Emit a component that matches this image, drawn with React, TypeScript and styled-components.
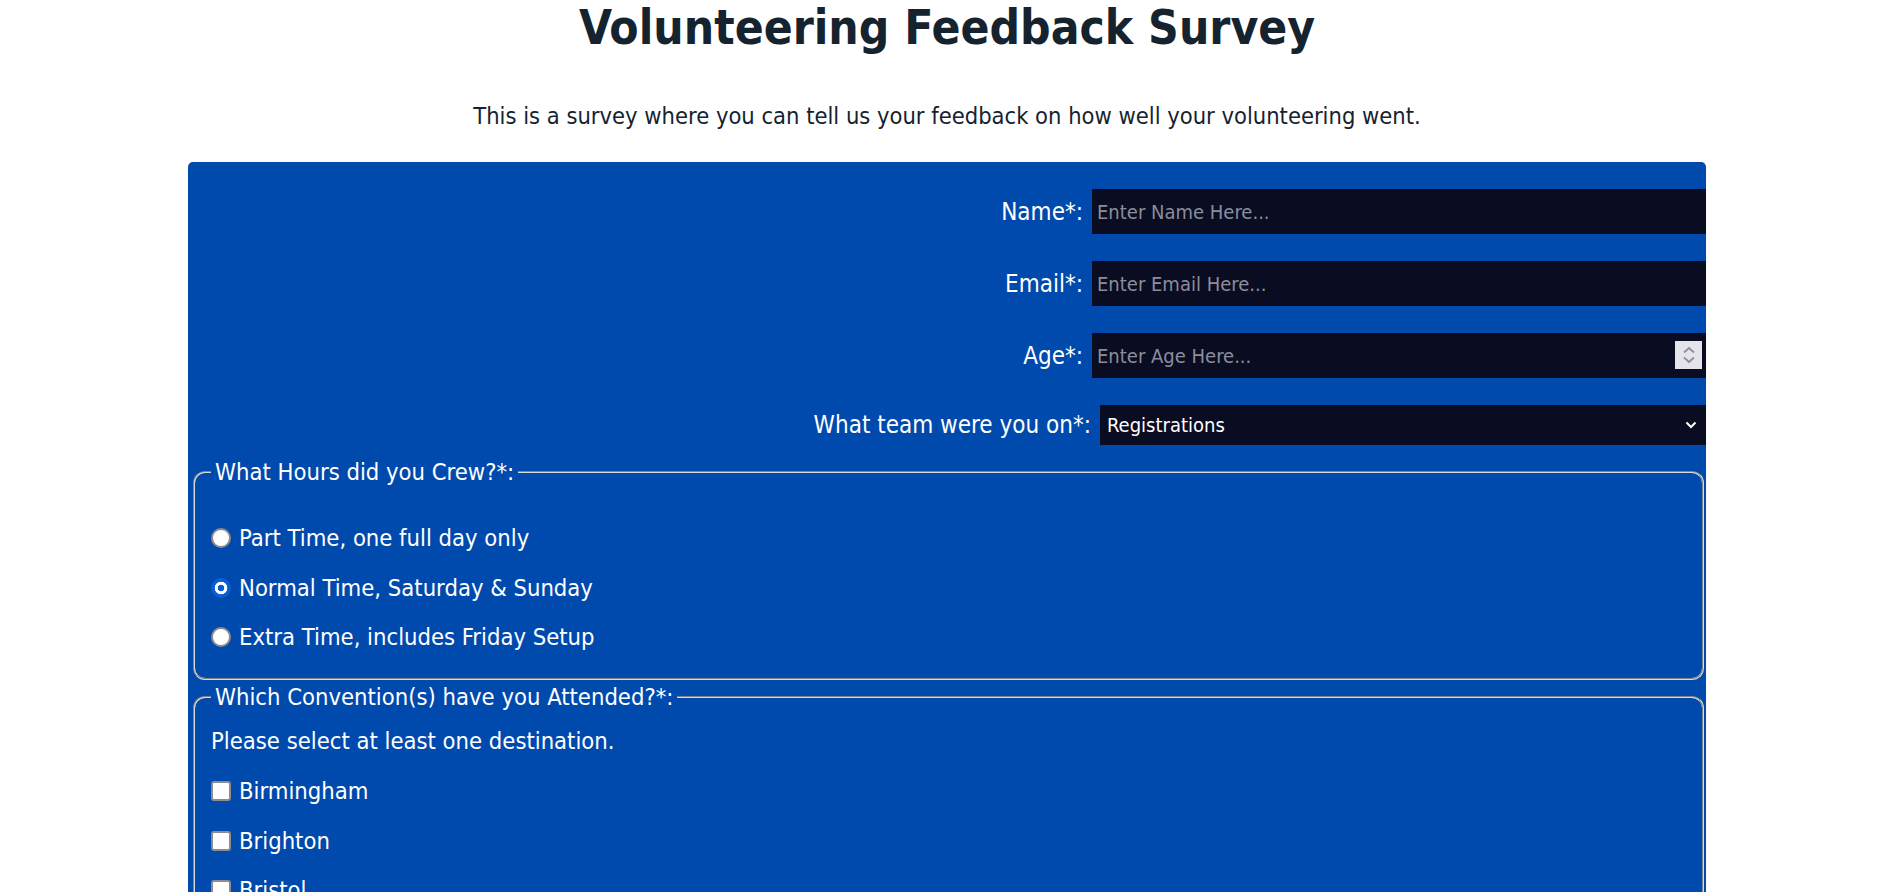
import React from "react";
import styled, { createGlobalStyle } from "styled-components";

const GlobalStyle = createGlobalStyle`
  html, body {
    margin: 0;
    padding: 0;
    background: #ffffff;
  }
  body {
    font-family: "DejaVu Sans Condensed", "DejaVu Sans", "Noto Sans", sans-serif;
    color: #15232f;
  }
  * { box-sizing: border-box; }
`;

const Page = styled.main`
  display: flex;
  flex-direction: column;
  align-items: center;
`;

const Title = styled.h1`
  margin: 0;
  font-size: 47.5px;
  font-weight: bold;
  color: #15232f;
  text-align: center;
`;

const Intro = styled.p`
  margin: 47px 0 32px;
  font-size: 23.5px;
  color: #15232f;
  text-align: center;
`;

const Panel = styled.form`
  width: 1518px;
  background: #004aad;
  border-radius: 5px 5px 0 0;
  padding: 27px 0 40px;
  display: flex;
  flex-direction: column;
  box-shadow: 0 0 3px rgba(0, 0, 0, 0.04);
`;

const Row = styled.div`
  display: flex;
  justify-content: flex-end;
  align-items: center;
  gap: 9px;
  margin-bottom: 27px;
  &:last-of-type { margin-bottom: 0; }
`;

const Label = styled.label`
  font-size: 24px;
  color: #ffffff;
  white-space: nowrap;
`;

const ControlWrap = styled.div<{ $w: number }>`
  position: relative;
  width: ${(p) => p.$w}px;
  display: flex;
`;

const TextInput = styled.input`
  width: 100%;
  height: 45px;
  border: none;
  outline: none;
  background: #0a0c22;
  color: #ffffff;
  font-family: inherit;
  font-size: 20px;
  padding: 0 5px;
  &::placeholder { color: #8c8c9b; }
  &::-webkit-inner-spin-button,
  &::-webkit-outer-spin-button {
    -webkit-appearance: none;
    margin: 0;
  }
  -moz-appearance: textfield;
`;

const Spinner = styled.span`
  position: absolute;
  right: 4px;
  top: 8px;
  width: 27px;
  height: 28px;
  background: #e4e4ea;
  display: flex;
  align-items: center;
  justify-content: center;
  pointer-events: none;
`;

const Select = styled.select`
  width: 100%;
  height: 40px;
  border: none;
  outline: none;
  background: #0a0c22;
  color: #ffffff;
  font-family: inherit;
  font-size: 20px;
  padding: 0 30px 0 7px;
  appearance: none;
  -webkit-appearance: none;
`;

const Chevron = styled.svg`
  position: absolute;
  right: 9px;
  top: 16px;
  pointer-events: none;
`;

const Group = styled.fieldset<{ $top: number }>`
  margin: 0 2px 3px 5px;
  border: 2px groove #d8d8d8;
  border-radius: 12px;
  padding: ${(p) => p.$top}px 16px 27px;
  color: #ffffff;
  font-size: 23.6px;
  min-width: 0;
  &:first-of-type { margin-top: 13px; }
`;

const Legend = styled.legend`
  padding: 0 4px;
  font-size: 23.6px;
  line-height: 28px;
  color: #ffffff;
`;

const Hint = styled.p`
  margin: 0 0 22px;
  line-height: 28px;
  font-size: 23.6px;
`;

const OptionList = styled.div`
  display: flex;
  flex-direction: column;
  gap: 21.5px;
`;

const Option = styled.label`
  display: flex;
  align-items: center;
  gap: 8px;
  height: 28px;
  font-size: 23.6px;
  color: #ffffff;
`;

const Radio = styled.input.attrs({ type: "radio" })`
  appearance: none;
  -webkit-appearance: none;
  width: 20px;
  height: 20px;
  margin: 0;
  flex: none;
  border-radius: 50%;
  background: #ffffff;
  border: 2.5px solid #8c8c92;
  &:checked {
    border: none;
    background: radial-gradient(circle, #0b5cd5 0 3px, #ffffff 3.6px 6px, #0b5cd5 6.6px);
  }
`;

const Check = styled.input.attrs({ type: "checkbox" })`
  appearance: none;
  -webkit-appearance: none;
  width: 20px;
  height: 20px;
  margin: 0;
  flex: none;
  border-radius: 3px;
  background: #ffffff;
  border: 2.5px solid #8c8c92;
`;

const hours = [
  "Part Time, one full day only",
  "Normal Time, Saturday & Sunday",
  "Extra Time, includes Friday Setup",
];

const conventions = [
  "Birmingham",
  "Brighton",
  "Bristol",
  "Cardiff",
  "Edinburgh",
  "London",
  "Manchester",
];

export default function App() {
  return (
    <>
      <GlobalStyle />
      <Page>
        <Title>Volunteering Feedback Survey</Title>
        <Intro>
          This is a survey where you can tell us your feedback on how well your volunteering went.
        </Intro>
        <Panel onSubmit={(e) => e.preventDefault()}>
          <Row>
            <Label htmlFor="name">Name*:</Label>
            <ControlWrap $w={614}>
              <TextInput id="name" type="text" placeholder="Enter Name Here..." />
            </ControlWrap>
          </Row>
          <Row>
            <Label htmlFor="email">Email*:</Label>
            <ControlWrap $w={614}>
              <TextInput id="email" type="email" placeholder="Enter Email Here..." />
            </ControlWrap>
          </Row>
          <Row>
            <Label htmlFor="age">Age*:</Label>
            <ControlWrap $w={614}>
              <TextInput id="age" type="number" placeholder="Enter Age Here..." />
              <Spinner>
                <svg width="14" height="20" viewBox="0 0 14 20" fill="none">
                  <path d="M2 7.5 L7 3 L12 7.5" stroke="#8e8e9c" strokeWidth="1.8" />
                  <path d="M2 12.5 L7 17 L12 12.5" stroke="#8e8e9c" strokeWidth="1.8" />
                </svg>
              </Spinner>
            </ControlWrap>
          </Row>
          <Row>
            <Label htmlFor="team">What team were you on*:</Label>
            <ControlWrap $w={606}>
              <Select id="team" defaultValue="Registrations">
                <option>Registrations</option>
                <option>Security</option>
                <option>Tech</option>
                <option>Info Desk</option>
              </Select>
              <Chevron width="12" height="8" viewBox="0 0 12 8" fill="none">
                <path d="M1.5 1.5 L6 6 L10.5 1.5" stroke="#ffffff" strokeWidth="2" />
              </Chevron>
            </ControlWrap>
          </Row>

          <Group $top={38}>
            <Legend>What Hours did you Crew?*:</Legend>
            <OptionList>
              {hours.map((h, i) => (
                <Option key={h}>
                  <Radio name="hours" defaultChecked={i === 1} />
                  {h}
                </Option>
              ))}
            </OptionList>
          </Group>

          <Group $top={16}>
            <Legend>Which Convention(s) have you Attended?*:</Legend>
            <Hint>Please select at least one destination.</Hint>
            <OptionList>
              {conventions.map((c) => (
                <Option key={c}>
                  <Check name="conventions" />
                  {c}
                </Option>
              ))}
            </OptionList>
          </Group>
        </Panel>
      </Page>
    </>
  );
}
